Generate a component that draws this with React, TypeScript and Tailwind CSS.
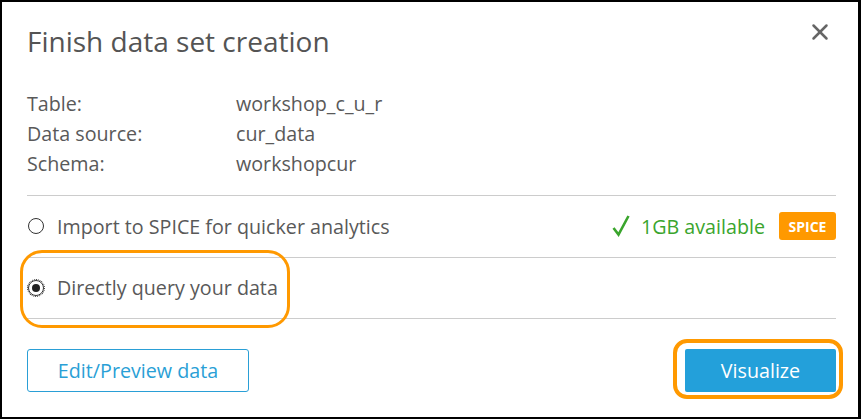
import { X } from 'lucide-react'

const info = [
  { label: 'Table:', value: 'workshop_c_u_r' },
  { label: 'Data source:', value: 'cur_data' },
  { label: 'Schema:', value: 'workshopcur' },
]

function Radio({ checked }: { checked?: boolean }) {
  return (
    <span className="relative flex size-[16px] flex-none items-center justify-center rounded-full border border-[#333] bg-white">
      {checked && (
        <>
          <span className="absolute -inset-[2px] rounded-full border border-dotted border-[#222]" />
          <span className="size-[8px] rounded-full bg-[#222]" />
        </>
      )}
    </span>
  )
}

export default function App() {
  return (
    <div
      className="box-border h-[419px] w-[861px] border-t-2 border-r-[3px] border-b-2 border-l-2 border-black bg-white text-[#595959]"
      style={{ fontFamily: '"Open Sans", "Noto Sans", sans-serif' }}
    >
      <div className="flex h-full flex-col pr-[22px] pl-[25px]">
        <div className="flex items-start justify-between pt-[19px]">
          <h1 className="text-[28px] leading-[40px] font-normal text-[#545454]">
            Finish data set creation
          </h1>
          <button className="-mt-[2px] mr-[3px] text-[#666]">
            <X className="size-[26px]" strokeWidth={2.3} />
          </button>
        </div>

        <div className="mt-[28px] flex flex-col text-[19.7px] leading-[30px]">
          {info.map((row) => (
            <div key={row.label} className="flex">
              <span className="w-[209px]">{row.label}</span>
              <span>{row.value}</span>
            </div>
          ))}
        </div>

        <div className="mt-[16px] border-t border-[#ccc]" />

        <div className="flex h-[61px] items-center text-[19.7px]">
          <div className="flex items-center gap-[13px] pl-[1px]">
            <Radio />
            <span>Import to SPICE for quicker analytics</span>
          </div>
          <div className="ml-auto flex items-center text-[#3aa52d]">
            <svg viewBox="0 0 18 24" className="h-[24px] w-[18px]" fill="none" stroke="currentColor" strokeWidth={2.6}>
              <path d="M1.5 14 L6.5 20.5 L16.5 2" />
            </svg>
            <span className="ml-[11px]">1GB available</span>
            <span className="ml-[14px] flex h-[28px] w-[57px] items-center justify-center rounded-[3px] bg-[#ff9900] text-[14px] font-bold text-white">
              SPICE
            </span>
          </div>
        </div>

        <div className="border-t border-[#ccc]" />

        <div className="flex h-[60px] items-center text-[19.7px]">
          <div className="relative flex items-center gap-[13px] pl-[1px]">
            <Radio checked />
            <span>Directly query your data</span>
            <span className="pointer-events-none absolute top-[-23px] bottom-[-25px] left-[-7px] right-[-12px] rounded-[22px] border-[3px] border-[#ff9900]" />
          </div>
        </div>

        <div className="border-t border-[#ccc]" />

        <div className="mt-[30px] flex items-center justify-between">
          <button className="flex h-[43px] w-[222px] items-center justify-center rounded-[3px] border border-[#2a9fd6] text-[19.7px] text-[#2a9fd6]">
            Edit/Preview data
          </button>
          <div className="relative">
            <button className="flex h-[43px] w-[151px] items-center justify-center rounded-[2px] bg-[#23a0da] text-[19.7px] text-white">
              Visualize
            </button>
            <span className="pointer-events-none absolute top-[-10px] bottom-[-7px] left-[-12px] right-[-7px] rounded-[14px] border-[4px] border-[#ff9900]" />
          </div>
        </div>
      </div>
    </div>
  )
}
